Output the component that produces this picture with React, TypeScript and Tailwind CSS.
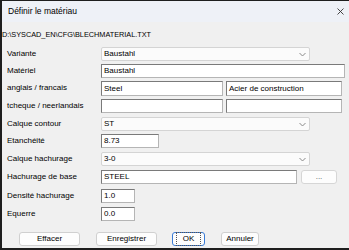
import React from "react";

const font = { fontFamily: '"Liberation Sans", Arial, sans-serif' };

function Chevron() {
  return (
    <svg width="7" height="5" viewBox="0 0 7 5" className="shrink-0">
      <path d="M0.5 1 L3.5 4 L6.5 1" fill="none" stroke="#8a8a8a" strokeWidth="1" />
    </svg>
  );
}

function Select({ value, w }: { value: string; w: string }) {
  return (
    <div className={`${w} h-[14px] bg-[#fbfbfb] border border-[#d4d4d4] rounded-[2px] flex items-center justify-between pl-[2px] pr-[3px]`}>
      <span className="text-[8px] text-black leading-none">{value}</span>
      <Chevron />
    </div>
  );
}

function Input({ value, w, h = "h-[14px]" }: { value: string; w: string; h?: string }) {
  return (
    <div className={`${w} ${h} bg-white border border-[#7a7a7a] border-b-[#b5b5b5] border-r-[#b5b5b5] flex items-center pl-[2px]`}>
      <span className="text-[8px] text-black leading-none">{value}</span>
    </div>
  );
}

function Row({ label, h, children }: { label: string; h: string; children: React.ReactNode }) {
  return (
    <div className={`flex ${h} items-start`}>
      <div className="w-[99px] h-[14px] flex items-center pl-[5px] text-[8px] text-black leading-none">{label}</div>
      {children}
    </div>
  );
}

function Btn({ label, w, focus }: { label: string; w: string; focus?: boolean }) {
  return (
    <div className={`${w} h-[14px] bg-[#fdfdfd] border ${focus ? "border-[#3a7bd5]" : "border-[#d0d0d0]"} rounded-[3px] flex items-center justify-center`}>
      <span className={`text-[8px] text-black leading-none ${focus ? "outline outline-1 outline-dotted outline-[#555] px-[6px] py-[2px]" : ""}`}>{label}</span>
    </div>
  );
}

export default function App() {
  return (
    <div className="w-[349px] h-[250px] bg-[#1e1e1e] pt-[1px] pl-[2px] pb-[2px] overflow-hidden" style={font}>
      <div className="w-[347px] h-[247px] bg-[#f0f0f0] flex flex-col">
        <div className="h-[21px] bg-[#eef1f7] flex items-center justify-between pl-[6px] pr-[5px]">
          <span className="text-[8.5px] text-black leading-none">Définir le matériau</span>
          <svg width="7" height="7" viewBox="0 0 7 7">
            <path d="M0.5 0.5 L6.5 6.5 M6.5 0.5 L0.5 6.5" stroke="#333" strokeWidth="0.9" />
          </svg>
        </div>
        <div className="h-[25px] flex items-center pl-[0px] text-[7.3px] text-black leading-none">
          D:\SYSCAD_EN\CFG\BLECHMATERIAL.TXT
        </div>
        <div className="flex flex-col">
          <Row label="Variante" h="h-[17px]">
            <Select value="Baustahl" w="w-[209px]" />
          </Row>
          <Row label="Matériel" h="h-[17px]">
            <Input value="Baustahl" w="w-[244px]" />
          </Row>
          <Row label="anglais / francais" h="h-[18px]">
            <div className="flex gap-[3px]">
              <Input value="Steel" w="w-[122px]" h="h-[15px]" />
              <Input value="Acier de construction" w="w-[116px]" h="h-[15px]" />
            </div>
          </Row>
          <Row label="tcheque / neerlandais" h="h-[18px]">
            <div className="flex gap-[3px]">
              <Input value="" w="w-[122px]" />
              <Input value="" w="w-[116px]" />
            </div>
          </Row>
          <Row label="Calque contour" h="h-[17px]">
            <Select value="ST" w="w-[209px]" />
          </Row>
          <Row label="Etanchéité" h="h-[18px]">
            <Input value="8.73" w="w-[58px]" />
          </Row>
          <Row label="Calque hachurage" h="h-[18px]">
            <Select value="3-0" w="w-[209px]" />
          </Row>
          <Row label="Hachurage de base" h="h-[19px]">
            <div className="flex gap-[4px]">
              <Input value="STEEL" w="w-[196px]" />
              <div className="w-[36px] h-[14px] bg-[#fdfdfd] border border-[#d6d6d6] rounded-[3px] flex items-center justify-center">
                <span className="text-[8px] text-[#555] leading-none">...</span>
              </div>
            </div>
          </Row>
          <Row label="Densité hachurage" h="h-[18px]">
            <Input value="1.0" w="w-[34px]" />
          </Row>
          <Row label="Equerre" h="h-[25px]">
            <Input value="0.0" w="w-[34px]" />
          </Row>
          <div className="flex items-start pl-[17px]">
            <Btn label="Effacer" w="w-[61px]" />
            <div className="w-[16px]" />
            <Btn label="Enregistrer" w="w-[61px]" />
            <div className="w-[15px]" />
            <Btn label="OK" w="w-[33px]" focus />
            <div className="w-[16px]" />
            <Btn label="Annuler" w="w-[38px]" />
          </div>
        </div>
      </div>
    </div>
  );
}
